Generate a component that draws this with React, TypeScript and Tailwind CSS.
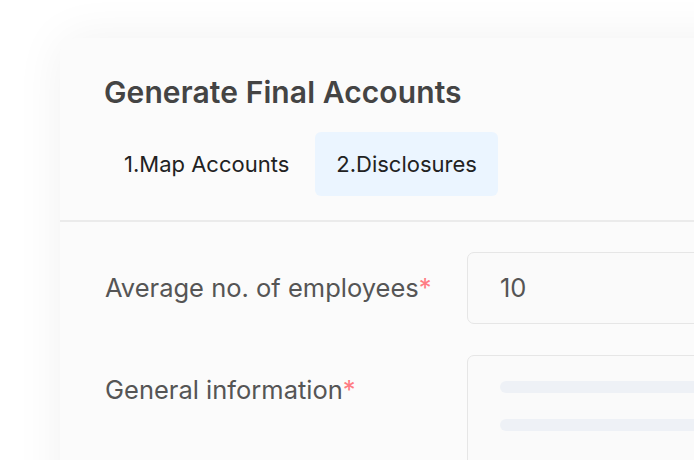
import React from "react";

export default function App() {
  return (
    <div
      className="w-[694px] h-[460px] overflow-hidden bg-white pl-[60px] pt-[38px]"
      style={{ fontFamily: "Inter, 'Noto Sans', sans-serif" }}
    >
      <div className="w-[700px] h-[520px] rounded-tl-[16px] bg-[#fbfbfb] shadow-[0_0_50px_rgba(0,0,0,0.06)]">
        <div className="pl-[44px] pt-[36px]">
          <h1 className="text-[30px] leading-[36px] font-semibold text-[#444444] tracking-[0.1px]">
            Generate Final Accounts
          </h1>
          <div className="mt-[22px] flex gap-[6px]">
            <div className="h-[64px] px-[20px] flex items-center rounded-[6px] text-[22px] text-[#222222]">
              1.Map Accounts
            </div>
            <div className="h-[64px] px-[21px] flex items-center rounded-[6px] bg-[#ebf5ff] text-[22px] text-[#222222]">
              2.Disclosures
            </div>
          </div>
        </div>
        <div className="mt-[24px] h-[2px] bg-[#ebebeb]" />
        <div className="pl-[45px] pt-[30px] flex flex-col gap-[31px]">
          <div className="flex items-center">
            <div className="w-[362px] text-[25.5px] leading-[32px] text-[#555555]">
              Average no. of employees<span className="text-[#ff7b83]">*</span>
            </div>
            <div className="flex-1 h-[72px] rounded-[7px] border border-[#e6e6e6] bg-[#fafafa] pl-[32px] flex items-center text-[25.5px] text-[#555555]">
              10
            </div>
          </div>
          <div className="flex items-start">
            <div className="w-[362px] pt-[19px] text-[25.5px] leading-[32px] text-[#555555]">
              General information<span className="text-[#ff7b83]">*</span>
            </div>
            <div className="flex-1 h-[140px] rounded-[7px] border border-[#e6e6e6] bg-[#fafafa] pl-[32px] pt-[25px] flex flex-col gap-[26px]">
              <div className="h-[12px] rounded-full bg-[#eef1f6]" />
              <div className="h-[12px] rounded-full bg-[#eef1f6]" />
            </div>
          </div>
        </div>
      </div>
    </div>
  );
}
